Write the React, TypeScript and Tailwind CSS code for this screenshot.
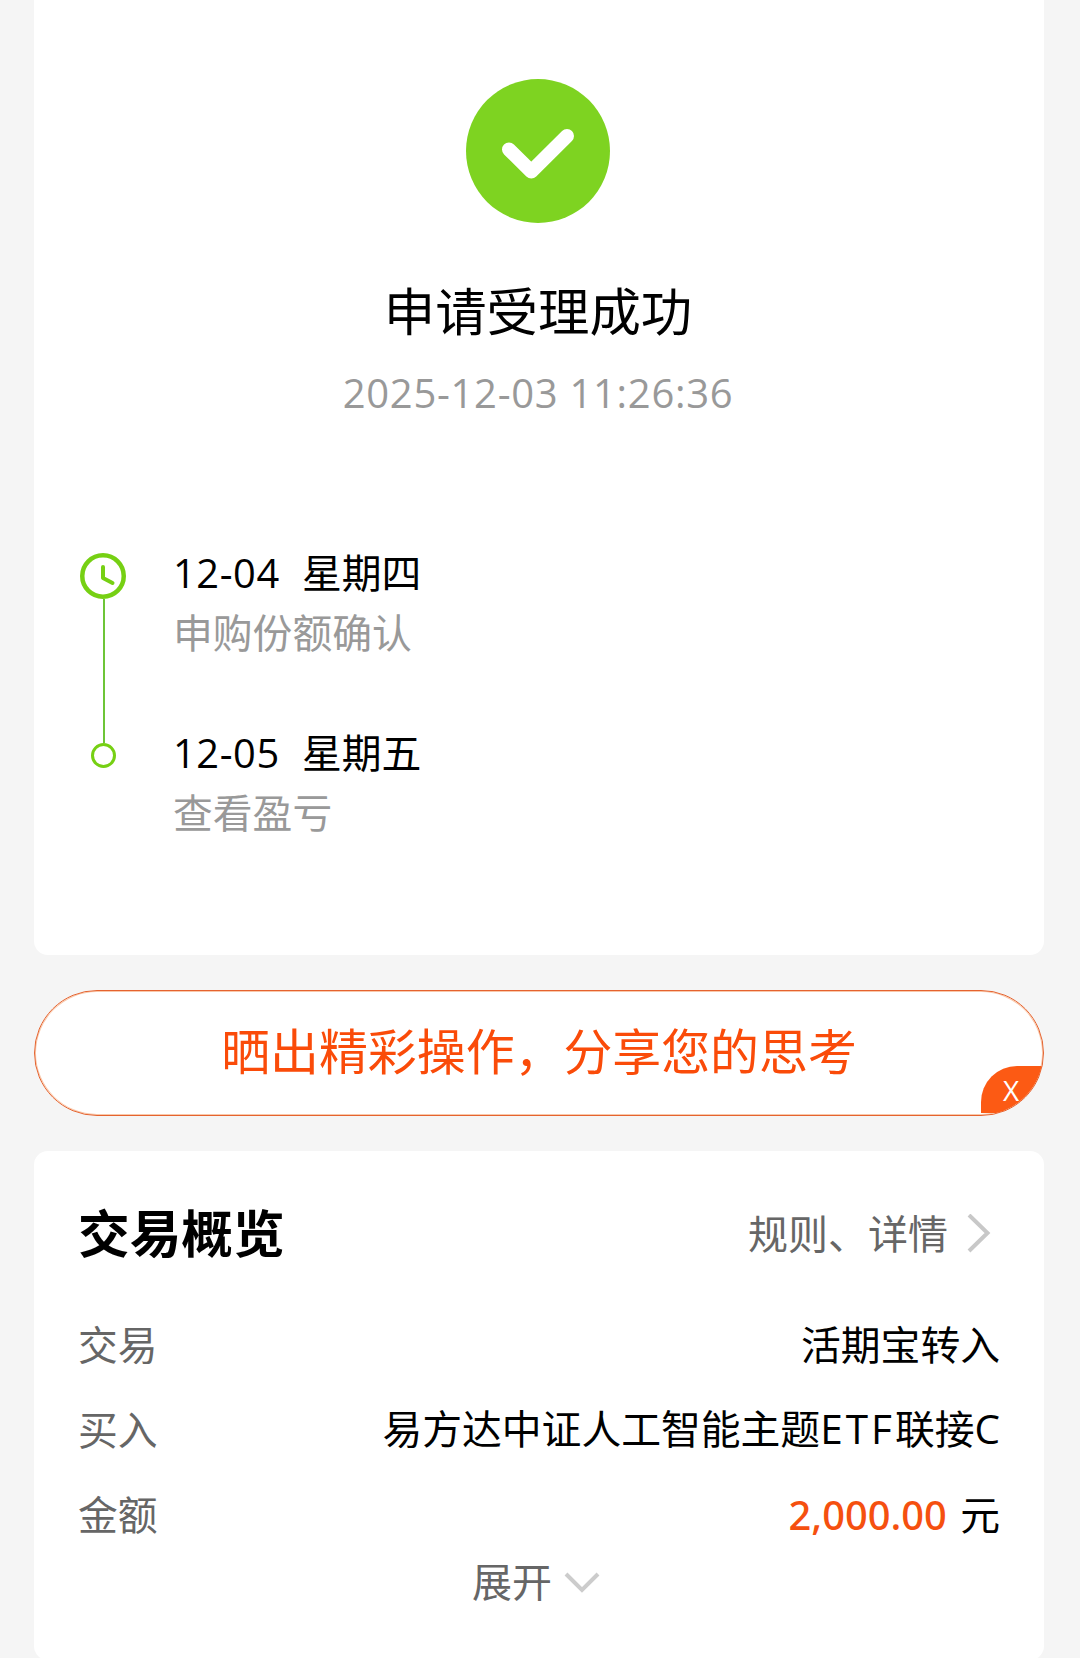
import React from 'react';

interface Step {
  date: string;
  weekday: string;
  label: string;
}

interface OverviewRowProps {
  label: string;
  children: React.ReactNode;
}

const steps: Step[] = [
  { date: '12-04', weekday: '星期四', label: '申购份额确认' },
  { date: '12-05', weekday: '星期五', label: '查看盈亏' },
];

const SuccessIcon = () => (
  <svg className="mr-[2px]" width="144" height="144" viewBox="0 0 144 144" fill="none">
    <circle cx="72" cy="72" r="72" fill="#7ed321" />
    <path d="M43 70.5 65.3 92.5 101 57" stroke="#fff" strokeWidth="14" strokeLinecap="round" strokeLinejoin="round" />
  </svg>
);

const ClockIcon = () => (
  <svg width="46" height="46" viewBox="0 0 46 46" fill="none" stroke="#76d013" strokeWidth="4.5">
    <circle cx="23" cy="23" r="20.75" />
    <path d="M23 14v11l9.500 5" strokeWidth="4" strokeLinecap="round" strokeLinejoin="round" />
  </svg>
);

const OverviewRow: React.FC<OverviewRowProps> = ({ label, children }) => (
  <div className="flex h-[85px] items-center justify-between text-[39.8px]">
    <span className="text-[#666]">{label}</span>
    <span className="text-black">{children}</span>
  </div>
);

const App: React.FC = () => {
  return (
    <div className="h-[1658px] w-[1080px] overflow-hidden bg-[#f5f5f5] pr-9 pl-[34px] font-['Open_Sans','Noto_Sans_CJK_SC',sans-serif] leading-none whitespace-nowrap">
      {/* Result */}
      <section className="flex h-[955px] flex-col items-center rounded-b-[14px] bg-white pt-[79px]">
        <SuccessIcon />
        <h1 className="mt-[52px] mr-[2px] h-[72px] text-[51.4px] leading-[72px] text-black">申请受理成功</h1>
        <p className="mt-[18px] mr-[2px] h-[56px] text-[40px] leading-[56px] tracking-[0.7px] text-[#999]">
          2025-12-03 11:26:36
        </p>

        <div className="mt-[132px] flex w-full pl-[46px]">
          <div className="flex w-[46px] flex-col items-center">
            <ClockIcon />
            <div className="ml-[2px] h-[144px] w-[2px] bg-[#6dc537]" />
            <div className="ml-[1px] size-[25px] rounded-full border-[3px] border-[#76d013]" />
          </div>
          <div className="ml-[47px]">
            {steps.map(step => (
              <div key={step.date} className="h-[180px] text-[39.8px]">
                <div className="flex h-[40px] items-center text-black">
                  <span className="w-[129px] tracking-[0.6px]">{step.date}</span>
                  <span>{step.weekday}</span>
                </div>
                <div className="mt-[19px] flex h-[42px] items-center text-[#999]">{step.label}</div>
              </div>
            ))}
          </div>
        </div>
      </section>

      {/* Share banner */}
      <div className="relative mt-[35px] flex h-[126px] items-center justify-center overflow-hidden rounded-full border border-[#e5632f] bg-white shadow-[inset_0_0_0_1px_#f9c8aa]">
        <span className="-mt-[3px] text-[48.9px] text-[#fa4b09]">晒出精彩操作，分享您的思考</span>
        <button type="button" className="absolute right-0 bottom-[2px] flex h-[47px] w-[62px] items-center rounded-tl-[36px] bg-[#fc5a14] pl-[22px] text-[28px] text-white">
          X
        </button>
      </div>

      {/* Overview */}
      <section className="mt-[35px] h-[509px] rounded-[14px] bg-white pt-[43px] pr-[44px] pl-[44px]">
        <div className="flex h-[80px] items-center justify-between">
          <h2 className="text-[51.7px] font-bold text-black">交易概览</h2>
          <div className="flex items-center pr-[9px] text-[40px] text-[#666]">
            规则、详情
            <svg className="ml-[19px]" width="24" height="40" viewBox="0 0 24 40" fill="none" stroke="#c8c8c8" strokeWidth="4">
              <path d="M2 1 20.500 19 2 37" />
            </svg>
          </div>
        </div>

        <div className="mt-[28px]">
          <OverviewRow label="交易">活期宝转入</OverviewRow>
          <OverviewRow label="买入">
            易方达中证人工智能主题<span className="text-[40.5px] tracking-[3px]">ETF</span>联接<span className="text-[40.5px]">C</span>
          </OverviewRow>
          <OverviewRow label="金额">
            <span className="mr-[3px] font-['Noto_Sans'] font-medium text-[#f5500f]">2,000.00</span> 元
          </OverviewRow>
        </div>

        <div className="flex h-[50px] items-center justify-center pr-[6px] text-[40px] text-[#666]">
          展开
          <svg className="mt-[2px] ml-[12px]" width="36" height="22" viewBox="0 0 36 22" fill="none" stroke="#ccc" strokeWidth="4">
            <path d="M2 2 18 18 34 2" />
          </svg>
        </div>
      </section>
    </div>
  );
};

export default App;
